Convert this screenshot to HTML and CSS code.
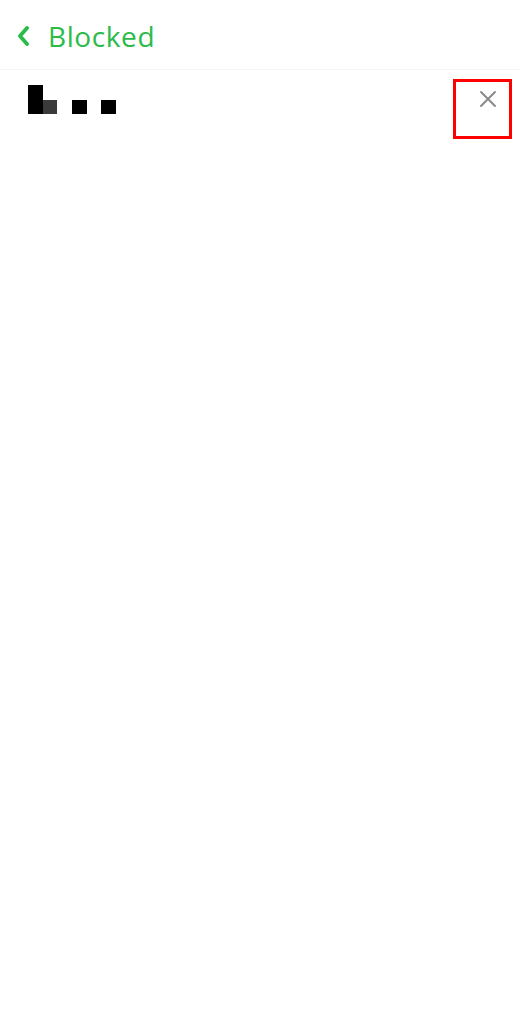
FILE: index.html
```html
<!DOCTYPE html>
<html>
<head>
<meta charset="utf-8">
<link rel="stylesheet" href="styles.css">
</head>
<body>
<div class="page">
  <header class="topbar">
    <svg class="chev" width="12" height="20" viewBox="0 0 12 20"><path d="M10 2 L3 10 L10 18" fill="none" stroke="#2bbb4a" stroke-width="3.8" stroke-linecap="round" stroke-linejoin="round"/></svg>
    <span class="title">Blocked</span>
  </header>
  <div class="row">
    <div class="avatar">
      <span class="px tall"></span><span class="px gray"></span><span class="gap1"></span><span class="px dot"></span><span class="gap2"></span><span class="px dot"></span>
    </div>
    <div class="closebox">
      <svg width="18" height="18" viewBox="0 0 18 18"><path d="M2 2 L16 16 M16 2 L2 16" stroke="#8a8a8a" stroke-width="2" stroke-linecap="round"/></svg>
    </div>
  </div>
</div>
</body>
</html>
```
FILE: styles.css
```css
html, body { margin: 0; padding: 0; background: #fff; }
.page { width: 519px; min-height: 1024px; background: #fff; }
.topbar {
  height: 70px;
  box-sizing: border-box;
  border-bottom: 1px solid #f4f4f4;
  display: flex;
  align-items: center;
  padding-left: 17px;
  padding-top: 2px;
}
.chev { display: block; margin-right: 19px; }
.title {
  font-family: "Open Sans", "Lato", sans-serif;
  font-size: 28px;
  font-weight: 500;
  color: #2bbb4a;
  letter-spacing: 0.6px;
}
.row {
  display: flex;
  justify-content: space-between;
  align-items: flex-start;
  padding-top: 9px;
}
.avatar {
  display: flex;
  align-items: flex-end;
  margin-left: 28px;
  margin-top: 6px;
  height: 29px;
}
.px { display: block; }
.tall { width: 15px; height: 29px; background: #000; }
.gray { width: 14px; height: 14px; background: #3a3a3a; }
.gap1 { width: 15px; }
.gap2 { width: 14px; }
.dot { width: 15px; height: 14px; background: #000; }
.closebox {
  width: 59px;
  height: 60px;
  box-sizing: border-box;
  border: 3px solid #f00;
  margin-right: 7px;
  display: flex;
  justify-content: flex-end;
  padding-top: 8px;
  padding-right: 12px;
}
.closebox svg { display: block; }
```
